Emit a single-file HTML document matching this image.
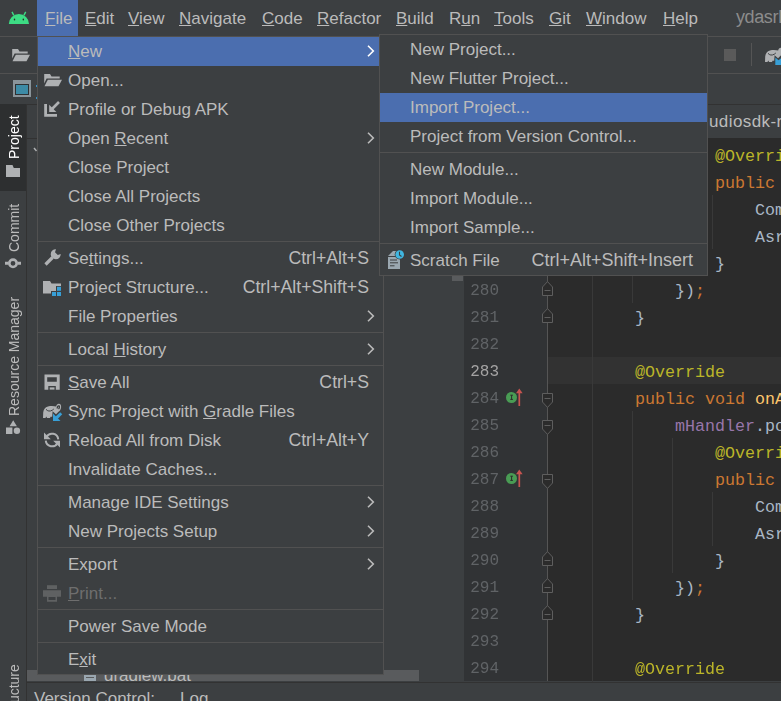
<!DOCTYPE html>
<html><head><meta charset="utf-8">
<style>
*{margin:0;padding:0;box-sizing:border-box}
html,body{width:781px;height:701px;overflow:hidden;background:#3C3F41;font-family:"Liberation Sans",sans-serif;color:#BBBBBB}
.a{position:absolute}
.t{position:absolute;white-space:pre;font-size:17px;line-height:29px;height:29px}
u{text-decoration:underline;text-decoration-thickness:1px;text-underline-offset:1px}
.mb{position:absolute;top:1px;height:36px;line-height:36px;font-size:17px;white-space:pre}
.code{position:absolute;font-family:"Liberation Mono",monospace;font-size:16.67px;line-height:27px;white-space:pre;color:#A9B7C6}
.ln{position:absolute;font-family:"Liberation Mono",monospace;font-size:16px;line-height:27px;color:#606366;text-align:right;width:60px;left:439px}
.kw{color:#CC7832}.an{color:#BBB529}.fn{color:#FFC66D}.fld{color:#9876AA}
.sep{position:absolute;height:1px;background:#515151}
.sc{position:absolute;white-space:pre;font-size:17.7px;line-height:29px;text-align:right}
.arr{position:absolute;width:9px;height:14px}
</style></head><body>

<!-- menubar -->
<div class="a" style="left:0;top:0;width:781px;height:36px;background:#3C3F41"></div>
<div class="a" style="left:0;top:36px;width:781px;height:1px;background:#515151"></div>
<svg class="a" style="left:8px;top:11px" width="22" height="14" viewBox="0 0 22 14">
 <path d="M0.8 13.1 A10.1 10 0 0 1 21 13.1 Z" fill="#3DDC84"/>
 <path d="M4 0.9 L5.8 4.4 M17.7 0.9 L15.9 4.4" stroke="#3DDC84" stroke-width="1.4"/>
 <ellipse cx="6.5" cy="8.6" rx="0.75" ry="1" fill="#2B2B2B"/><ellipse cx="15.3" cy="8.6" rx="0.75" ry="1" fill="#2B2B2B"/>
</svg>
<div class="a" style="left:37px;top:0;width:41px;height:36px;background:#4B6EAF"></div>
<div class="mb" style="left:45px"><u>F</u>ile</div>
<div class="mb" style="left:85px"><u>E</u>dit</div>
<div class="mb" style="left:128px"><u>V</u>iew</div>
<div class="mb" style="left:179px"><u>N</u>avigate</div>
<div class="mb" style="left:262px"><u>C</u>ode</div>
<div class="mb" style="left:317px"><u>R</u>efactor</div>
<div class="mb" style="left:396px"><u>B</u>uild</div>
<div class="mb" style="left:449px">R<u>u</u>n</div>
<div class="mb" style="left:494px"><u>T</u>ools</div>
<div class="mb" style="left:549px"><u>G</u>it</div>
<div class="mb" style="left:586px"><u>W</u>indow</div>
<div class="mb" style="left:663px"><u>H</u>elp</div>
<div class="mb" style="left:736px;top:-1px;color:#8C8C8C;font-size:18px;letter-spacing:-0.4px">ydasrDemo</div>

<!-- toolbar -->
<div class="a" style="left:0;top:73px;width:781px;height:1px;background:#515151"></div>
<div class="a" style="left:0;top:104px;width:781px;height:1px;background:#323232"></div>

<!-- left stripe -->
<div class="a" style="left:0;top:105px;width:26px;height:596px;background:#3C3F41"></div>
<div class="a" style="left:0;top:104px;width:26px;height:87px;background:#2D2F30"></div>
<div class="a" style="left:26px;top:105px;width:1px;height:596px;background:#323232"></div>


<!-- toolbar icons -->
<svg class="a" style="left:11px;top:47px" width="20" height="16" viewBox="0 0 20 16">
 <path d="M1.2 2 H7 L8.5 4.5 H16.7 V6.6 H3.6 L1.2 11.5 Z" fill="#AFB1B3"/>
 <path d="M4.8 7.8 H19 L15.5 14.3 H1.5 Z" fill="#AFB1B3"/>
</svg>
<div class="a" style="left:13px;top:80px;width:18px;height:17px;background:#8A949A"></div>
<div class="a" style="left:15px;top:84px;width:14px;height:11px;background:#2F3133"></div>
<div class="a" style="left:16px;top:85px;width:12px;height:9px;background:#3D8BA6"></div>
<div class="a" style="left:36px;top:85px;width:1px;height:2px;background:#3592C4"></div>
<div class="a" style="left:36px;top:97px;width:1px;height:2px;background:#3592C4"></div>
<div class="a" style="left:724px;top:49px;width:12px;height:12px;background:#5A5A5A"></div>
<div class="a" style="left:751px;top:43px;width:1px;height:23px;background:#555555"></div>
<svg class="a" style="left:761.5px;top:43px" width="24" height="24" viewBox="0 0 24 24">
 <path d="M3 19 L3.2 13.5 C3.5 10.5 5 8.3 8 7.5 C11 6.8 14 7 16.2 7.6 C16.5 5.8 17.5 4.8 18.8 4.8 C20.6 4.8 21.3 6.5 21.1 8.5 C20.9 10.5 19.8 11.8 18.8 12.6 L16 15.2 L12.6 12.2 L12.2 17.8 L10.5 17.8 L10 19 L7 19 L6.4 17.6 L5.4 19 Z" fill="#AFB1B3"/>
 <path d="M6 10.3 C7.5 12.3 10 12.6 12.3 11.2 L13.8 10" fill="none" stroke="#3C3F41" stroke-width="1"/>
 <path d="M13.3 14.5 L16.5 17.3 L20 14.5 L24 14.5 V22 H13.3 Z" fill="#389FD6"/>
</svg>
<div class="a" style="left:709px;top:104px;font-size:17px;line-height:36px;white-space:pre;letter-spacing:0.4px">udiosdk-release</div>

<!-- stripe -->
<div class="a" style="left:5.5px;top:159px;font-size:14px;line-height:16px;white-space:pre;color:#FFFFFF;transform-origin:0 0;transform:rotate(-90deg);will-change:transform">Project</div>
<svg class="a" style="left:6px;top:165px" width="14" height="12" viewBox="0 0 14 12">
 <path d="M0 0 H6.5 L7.8 3 H14 V12 H0 Z" fill="#AFB1B3"/>
</svg>
<div class="a" style="left:5.5px;top:252px;font-size:14px;line-height:16px;white-space:pre;transform-origin:0 0;transform:rotate(-90deg);will-change:transform">Commit</div>
<svg class="a" style="left:5px;top:258px" width="16" height="11" viewBox="0 0 16 11">
 <circle cx="8" cy="5.3" r="3.7" fill="none" stroke="#AFB1B3" stroke-width="2.6"/>
 <path d="M0 5.3 H3.5 M12.5 5.3 H16" stroke="#AFB1B3" stroke-width="3"/>
</svg>
<div class="a" style="left:5.5px;top:415.5px;font-size:14px;line-height:16px;white-space:pre;transform-origin:0 0;transform:rotate(-90deg);will-change:transform">Resource Manager</div>
<svg class="a" style="left:5px;top:419px" width="16" height="16" viewBox="0 0 16 16">
 <path d="M8.2 1.3 L11.9 7.2 H4.6 Z" fill="#AFB1B3"/>
 <rect x="1" y="8.5" width="6.4" height="6.5" fill="#AFB1B3"/>
 <circle cx="11.9" cy="11.7" r="3.2" fill="#AFB1B3"/>
</svg>
<div class="a" style="left:5.5px;top:721px;font-size:14px;line-height:16px;white-space:pre;transform-origin:0 0;transform:rotate(-90deg);will-change:transform">Structure</div>
<div class="a" style="left:27px;top:138px;width:10px;height:1px;background:#323232"></div>

<!-- project panel bottom -->
<svg class="a" style="left:33px;top:146px" width="6" height="8" viewBox="0 0 6 8"><path d="M1 2 L3.5 5" stroke="#AFB1B3" stroke-width="1.4"/></svg>
<div class="a" style="left:452px;top:200px;width:11px;height:81px;background:#595B5D"></div>
<div class="a" style="left:27px;top:670px;width:392px;height:11px;background:#595B5D;overflow:hidden">
  <div class="a" style="left:77px;top:-9px;font-size:17px;line-height:29px;white-space:pre;color:#BBBBBB">gradlew.bat</div>
  <div class="a" style="left:57px;top:3px;width:12px;height:8px;background:#9AA7B0"></div>
  <div class="a" style="left:59px;top:7px;width:8px;height:1px;background:#595B5D"></div>
</div>

<!-- editor -->
<div class="a" style="left:0;top:138px;width:781px;height:544px;overflow:hidden"><div class="a" style="left:0;top:-138px;width:781px;height:701px">
<div class="a" style="left:464px;top:138px;width:317px;height:543px;background:#313335"></div>
<div class="a" style="left:547px;top:138px;width:234px;height:543px;background:#2B2B2B"></div>

<div class="a" style="left:548px;top:357px;width:233px;height:27px;background:#323232"></div>
<div class="a" style="left:592px;top:114px;width:1px;height:729px;background:#393939"></div>
<div class="a" style="left:632px;top:141px;width:1px;height:162px;background:#393939"></div>
<div class="a" style="left:672px;top:195px;width:1px;height:81px;background:#393939"></div>
<div class="a" style="left:712px;top:195px;width:1px;height:54px;background:#393939"></div>
<div class="a" style="left:632px;top:411px;width:1px;height:189px;background:#393939"></div>
<div class="a" style="left:672px;top:438px;width:1px;height:135px;background:#393939"></div>
<div class="a" style="left:712px;top:492px;width:1px;height:54px;background:#393939"></div>
<div class="code" style="left:635px;top:116px"><span class="fld">mHandler</span>.post(<span class="kw">new </span>Runnable() {</div>
<div class="code" style="left:635px;top:143px">        <span class="an">@Override</span></div>
<div class="code" style="left:635px;top:170px">        <span class="kw">public void </span><span class="fn">run</span>() {</div>
<div class="code" style="left:635px;top:197px">            CommonUtils.log(</div>
<div class="code" style="left:635px;top:224px">            AsrManager.getInstance()</div>
<div class="code" style="left:635px;top:251px">        }</div>
<div class="code" style="left:635px;top:278px">    })<span class="kw">;</span></div>
<div class="code" style="left:635px;top:305px">}</div>
<div class="code" style="left:635px;top:332px"></div>
<div class="code" style="left:635px;top:359px"><span class="an">@Override</span></div>
<div class="code" style="left:635px;top:386px"><span class="kw">public void </span><span class="fn">onAsrResult</span>() {</div>
<div class="code" style="left:635px;top:413px">    <span class="fld">mHandler</span>.post(<span class="kw">new </span>Runnable() {</div>
<div class="code" style="left:635px;top:440px">        <span class="an">@Override</span></div>
<div class="code" style="left:635px;top:467px">        <span class="kw">public void </span><span class="fn">run</span>() {</div>
<div class="code" style="left:635px;top:494px">            CommonUtils.log(</div>
<div class="code" style="left:635px;top:521px">            AsrManager.getInstance()</div>
<div class="code" style="left:635px;top:548px">        }</div>
<div class="code" style="left:635px;top:575px">    })<span class="kw">;</span></div>
<div class="code" style="left:635px;top:602px">}</div>
<div class="code" style="left:635px;top:629px"></div>
<div class="code" style="left:635px;top:656px"><span class="an">@Override</span></div>
<div class="code" style="left:635px;top:683px"><span class="kw">public void </span><span class="fn">onAsrEnd</span>() {</div>
<div class="ln" style="top:116px;color:#606366">274</div>
<div class="ln" style="top:143px;color:#606366">275</div>
<div class="ln" style="top:170px;color:#606366">276</div>
<div class="ln" style="top:197px;color:#606366">277</div>
<div class="ln" style="top:224px;color:#606366">278</div>
<div class="ln" style="top:251px;color:#606366">279</div>
<div class="ln" style="top:278px;color:#606366">280</div>
<div class="ln" style="top:305px;color:#606366">281</div>
<div class="ln" style="top:332px;color:#606366">282</div>
<div class="ln" style="top:359px;color:#A4A3A3">283</div>
<div class="ln" style="top:386px;color:#606366">284</div>
<div class="ln" style="top:413px;color:#606366">285</div>
<div class="ln" style="top:440px;color:#606366">286</div>
<div class="ln" style="top:467px;color:#606366">287</div>
<div class="ln" style="top:494px;color:#606366">288</div>
<div class="ln" style="top:521px;color:#606366">289</div>
<div class="ln" style="top:548px;color:#606366">290</div>
<div class="ln" style="top:575px;color:#606366">291</div>
<div class="ln" style="top:602px;color:#606366">292</div>
<div class="ln" style="top:629px;color:#606366">293</div>
<div class="ln" style="top:656px;color:#606366">294</div>
<div class="ln" style="top:683px;color:#606366">295</div>
<div class="a" style="left:547px;top:138px;width:1px;height:543px;background:#555555"></div>
<svg class="a" style="left:541px;top:392px" width="13" height="17" viewBox="0 0 13 17"><path d="M1.5 1.5 H11.5 V10 L6.5 15.4 L1.5 10 Z" fill="#2B2B2B" stroke="#5E5E5E" stroke-width="1"/><path d="M3.5 6.5 H9.5" stroke="#5E5E5E" stroke-width="1"/></svg>
<svg class="a" style="left:541px;top:419px" width="13" height="17" viewBox="0 0 13 17"><path d="M1.5 1.5 H11.5 V10 L6.5 15.4 L1.5 10 Z" fill="#2B2B2B" stroke="#5E5E5E" stroke-width="1"/><path d="M3.5 6.5 H9.5" stroke="#5E5E5E" stroke-width="1"/></svg>
<svg class="a" style="left:541px;top:473px" width="13" height="17" viewBox="0 0 13 17"><path d="M1.5 1.5 H11.5 V10 L6.5 15.4 L1.5 10 Z" fill="#2B2B2B" stroke="#5E5E5E" stroke-width="1"/><path d="M3.5 6.5 H9.5" stroke="#5E5E5E" stroke-width="1"/></svg>
<svg class="a" style="left:541px;top:122px" width="13" height="17" viewBox="0 0 13 17"><path d="M1.5 1.5 H11.5 V10 L6.5 15.4 L1.5 10 Z" fill="#2B2B2B" stroke="#5E5E5E" stroke-width="1"/><path d="M3.5 6.5 H9.5" stroke="#5E5E5E" stroke-width="1"/></svg>
<svg class="a" style="left:541px;top:253px" width="13" height="17" viewBox="0 0 13 17"><path d="M1.5 15.5 H11.5 V7 L6.5 1.6 L1.5 7 Z" fill="#2B2B2B" stroke="#5E5E5E" stroke-width="1"/><path d="M3.5 10.5 H9.5" stroke="#5E5E5E" stroke-width="1"/></svg>
<svg class="a" style="left:541px;top:280px" width="13" height="17" viewBox="0 0 13 17"><path d="M1.5 15.5 H11.5 V7 L6.5 1.6 L1.5 7 Z" fill="#2B2B2B" stroke="#5E5E5E" stroke-width="1"/><path d="M3.5 10.5 H9.5" stroke="#5E5E5E" stroke-width="1"/></svg>
<svg class="a" style="left:541px;top:307px" width="13" height="17" viewBox="0 0 13 17"><path d="M1.5 15.5 H11.5 V7 L6.5 1.6 L1.5 7 Z" fill="#2B2B2B" stroke="#5E5E5E" stroke-width="1"/><path d="M3.5 10.5 H9.5" stroke="#5E5E5E" stroke-width="1"/></svg>
<svg class="a" style="left:541px;top:550px" width="13" height="17" viewBox="0 0 13 17"><path d="M1.5 15.5 H11.5 V7 L6.5 1.6 L1.5 7 Z" fill="#2B2B2B" stroke="#5E5E5E" stroke-width="1"/><path d="M3.5 10.5 H9.5" stroke="#5E5E5E" stroke-width="1"/></svg>
<svg class="a" style="left:541px;top:577px" width="13" height="17" viewBox="0 0 13 17"><path d="M1.5 15.5 H11.5 V7 L6.5 1.6 L1.5 7 Z" fill="#2B2B2B" stroke="#5E5E5E" stroke-width="1"/><path d="M3.5 10.5 H9.5" stroke="#5E5E5E" stroke-width="1"/></svg>
<svg class="a" style="left:541px;top:604px" width="13" height="17" viewBox="0 0 13 17"><path d="M1.5 15.5 H11.5 V7 L6.5 1.6 L1.5 7 Z" fill="#2B2B2B" stroke="#5E5E5E" stroke-width="1"/><path d="M3.5 10.5 H9.5" stroke="#5E5E5E" stroke-width="1"/></svg>
<svg class="a" style="left:505px;top:388px" width="19" height="19" viewBox="0 0 19 19"><circle cx="6.5" cy="9.5" r="5.5" fill="#499C54"/><path d="M5.3 7.2 H7.9 M6.6 7.2 V11.4 M5.3 11.4 H7.9" stroke="#2B2B2B" stroke-width="1"/><path d="M14.3 18 V4" stroke="#C75450" stroke-width="1.7"/><path d="M11 5.2 L14.3 0.6 L17.6 5.2 Z" fill="#C75450"/></svg>
<svg class="a" style="left:505px;top:469px" width="19" height="19" viewBox="0 0 19 19"><circle cx="6.5" cy="9.5" r="5.5" fill="#499C54"/><path d="M5.3 7.2 H7.9 M6.6 7.2 V11.4 M5.3 11.4 H7.9" stroke="#2B2B2B" stroke-width="1"/><path d="M14.3 18 V4" stroke="#C75450" stroke-width="1.7"/><path d="M11 5.2 L14.3 0.6 L17.6 5.2 Z" fill="#C75450"/></svg>
</div></div>
<!-- status bar -->
<div class="a" style="left:27px;top:682px;width:754px;height:1px;background:#323232"></div>
<div class="a" style="left:34px;top:687px;font-size:17px;line-height:24px;white-space:pre">Version Control:</div><div class="a" style="left:180px;top:687px;font-size:17px;line-height:24px;white-space:pre">Log</div>

<!-- File menu -->
<div class="a" style="left:37px;top:36px;width:347px;height:639px;background:#3C3F41;border:1px solid #515151"></div>
<div class="a" style="left:38px;top:37px;width:345px;height:29px;background:#4B6EAF"></div>

<div class="t" style="left:68px;top:37px;"><u>N</u>ew</div>
<svg class="a" style="left:366px;top:44px" width="10" height="14" viewBox="0 0 10 14"><path d="M2 1.8 L7.3 7 L2 12.2" fill="none" stroke="#FFFFFF" stroke-width="1.6"/></svg>
<div class="t" style="left:68px;top:66px;">Open...</div>
<div class="t" style="left:68px;top:95px;">Profile or Debug APK</div>
<div class="t" style="left:68px;top:124px;">Open <u>R</u>ecent</div>
<svg class="a" style="left:366px;top:131px" width="10" height="14" viewBox="0 0 10 14"><path d="M2 1.8 L7.3 7 L2 12.2" fill="none" stroke="#BBBBBB" stroke-width="1.6"/></svg>
<div class="t" style="left:68px;top:153px;">Close Project</div>
<div class="t" style="left:68px;top:182px;">Close All Projects</div>
<div class="t" style="left:68px;top:211px;">Close Other Projects</div>
<div class="t" style="left:68px;top:244px;">Se<u>t</u>tings...</div>
<div class="sc" style="right:412px;top:244px">Ctrl+Alt+S</div>
<div class="t" style="left:68px;top:273px;">Project Structure...</div>
<div class="sc" style="right:412px;top:273px">Ctrl+Alt+Shift+S</div>
<div class="t" style="left:68px;top:302px;">File Properties</div>
<svg class="a" style="left:366px;top:309px" width="10" height="14" viewBox="0 0 10 14"><path d="M2 1.8 L7.3 7 L2 12.2" fill="none" stroke="#BBBBBB" stroke-width="1.6"/></svg>
<div class="t" style="left:68px;top:335px;">Local <u>H</u>istory</div>
<svg class="a" style="left:366px;top:342px" width="10" height="14" viewBox="0 0 10 14"><path d="M2 1.8 L7.3 7 L2 12.2" fill="none" stroke="#BBBBBB" stroke-width="1.6"/></svg>
<div class="t" style="left:68px;top:368px;"><u>S</u>ave All</div>
<div class="sc" style="right:412px;top:368px">Ctrl+S</div>
<div class="t" style="left:68px;top:397px;">Sync Project with <u>G</u>radle Files</div>
<div class="t" style="left:68px;top:426px;">Reload All from Disk</div>
<div class="sc" style="right:412px;top:426px">Ctrl+Alt+Y</div>
<div class="t" style="left:68px;top:455px;">Invalidate Caches...</div>
<div class="t" style="left:68px;top:488px;">Manage IDE Settings</div>
<svg class="a" style="left:366px;top:495px" width="10" height="14" viewBox="0 0 10 14"><path d="M2 1.8 L7.3 7 L2 12.2" fill="none" stroke="#BBBBBB" stroke-width="1.6"/></svg>
<div class="t" style="left:68px;top:517px;">New Projects Setup</div>
<svg class="a" style="left:366px;top:524px" width="10" height="14" viewBox="0 0 10 14"><path d="M2 1.8 L7.3 7 L2 12.2" fill="none" stroke="#BBBBBB" stroke-width="1.6"/></svg>
<div class="t" style="left:68px;top:550px;">Export</div>
<svg class="a" style="left:366px;top:557px" width="10" height="14" viewBox="0 0 10 14"><path d="M2 1.8 L7.3 7 L2 12.2" fill="none" stroke="#BBBBBB" stroke-width="1.6"/></svg>
<div class="t" style="left:68px;top:579px;color:#6E6E6E;"><u>P</u>rint...</div>
<div class="t" style="left:68px;top:612px;">Power Save Mode</div>
<div class="t" style="left:68px;top:645px;">E<u>x</u>it</div>
<div class="sep" style="left:38px;top:241px;width:345px"></div>
<div class="sep" style="left:38px;top:332px;width:345px"></div>
<div class="sep" style="left:38px;top:365px;width:345px"></div>
<div class="sep" style="left:38px;top:485px;width:345px"></div>
<div class="sep" style="left:38px;top:547px;width:345px"></div>
<div class="sep" style="left:38px;top:609px;width:345px"></div>
<div class="sep" style="left:38px;top:642px;width:345px"></div>

<!-- file menu icons -->
<svg class="a" style="left:43px;top:72px" width="20" height="16" viewBox="0 0 20 16">
 <path d="M1.2 2 H7 L8.5 4.5 H16.7 V6.6 H3.6 L1.2 11.5 Z" fill="#AFB1B3"/>
 <path d="M4.8 7.8 H19 L15.5 14.3 H1.5 Z" fill="#AFB1B3"/>
</svg>
<svg class="a" style="left:43px;top:100px" width="18" height="18" viewBox="0 0 18 18">
 <path d="M2.6 4 V15.3 H14" fill="none" stroke="#AFB1B3" stroke-width="2.8"/>
 <path d="M16 2 L9 9" stroke="#AFB1B3" stroke-width="2.6"/>
 <path d="M6.2 4.8 V12 H13.4 Z" fill="#AFB1B3"/>
</svg>
<svg class="a" style="left:43px;top:247px" width="18" height="20" viewBox="0 0 18 20">
 <path d="M2.5 17.5 L9.5 10.5" stroke="#AFB1B3" stroke-width="3.2" stroke-linecap="butt"/>
 <path d="M13 2.3 A5 5 0 1 0 17.7 7 L14.8 8 L12 5.2 Z" fill="#AFB1B3"/>
</svg>
<svg class="a" style="left:43px;top:280px" width="20" height="18" viewBox="0 0 20 18">
 <path d="M0 1 H7 L8.5 3.5 H18 V6 H13 V11 H8 V13.5 H0 Z" fill="#AFB1B3"/>
 <rect x="14" y="6.8" width="4" height="4" fill="#389FD6"/>
 <rect x="9" y="12" width="4" height="4" fill="#389FD6"/>
 <rect x="14" y="12" width="4" height="4" fill="#389FD6"/>
</svg>
<svg class="a" style="left:44px;top:374px" width="17" height="17" viewBox="0 0 17 17">
 <path d="M0.5 0.5 H15.7 V15.7 H0.5 Z M3.2 3.2 V7.8 H12.8 V3.2 Z M4.3 12 V15.7 H11.8 V12 Z" fill="#AFB1B3" fill-rule="evenodd"/>
 <rect x="5.7" y="13.4" width="4.8" height="2.2" fill="#AFB1B3"/>
</svg>
<svg class="a" style="left:40px;top:399px" width="24" height="24" viewBox="0 0 24 24">
 <path d="M3 19 L3.2 13.5 C3.5 10.5 5 8.3 8 7.5 C11 6.8 14 7 16.2 7.6 C16.5 5.8 17.5 4.8 18.8 4.8 C20.6 4.8 21.3 6.5 21.1 8.5 C20.9 10.5 19.8 11.8 18.8 12.6 L16 15.2 L12.6 12.2 L12.2 17.8 L10.5 17.8 L10 19 L7 19 L6.4 17.6 L5.4 19 Z" fill="#AFB1B3"/>
 <path d="M17.2 9.5 C17.3 7.5 18 6.8 18.9 7 C19.8 7.2 19.6 9 18.5 10" fill="none" stroke="#3C3F41" stroke-width="1.3"/>
 <path d="M6 10.3 C7.5 12.3 10 12.6 12.3 11.2 L13.8 10" fill="none" stroke="#3C3F41" stroke-width="1"/>
 <path d="M21.2 14.2 L16.5 18.9" stroke="#389FD6" stroke-width="3"/>
 <path d="M13 14.5 V22 H20.5 Z" fill="#389FD6"/>
</svg>
<svg class="a" style="left:43px;top:432px" width="18" height="17" viewBox="0 0 18 17">
 <path d="M15.27 7.34 A6.3 6.3 0 0 0 3.54 4.85" fill="none" stroke="#AFB1B3" stroke-width="2"/>
 <path d="M1 0.6 V7.3 H7.8 Z" fill="#AFB1B3"/>
 <path d="M2.73 8.66 A6.3 6.3 0 0 0 14.46 11.15" fill="none" stroke="#AFB1B3" stroke-width="2"/>
 <path d="M17 15.5 V8.7 H10.2 Z" fill="#AFB1B3"/>
</svg>
<svg class="a" style="left:43px;top:585px" width="18" height="17" viewBox="0 0 18 17">
 <rect x="4" y="0.2" width="10" height="3.8" fill="#5F6162"/>
 <path d="M0 5.2 H18 V11.8 H14 V16.8 H4 V11.8 H0 Z M5.5 12 V15 H12.5 V12 Z" fill="#5F6162" fill-rule="evenodd"/>
</svg>

<!-- Submenu -->
<div class="a" style="left:379px;top:34px;width:329px;height:242px;background:#3C3F41;border:1px solid #515151"></div>
<div class="a" style="left:380px;top:93px;width:327px;height:29px;background:#4B6EAF"></div>

<div class="t" style="left:410px;top:35px">New Project...</div>
<div class="t" style="left:410px;top:64px">New Flutter Project...</div>
<div class="t" style="left:410px;top:93px">Import Project...</div>
<div class="t" style="left:410px;top:122px">Project from Version Control...</div>
<div class="t" style="left:410px;top:155px">New Module...</div>
<div class="t" style="left:410px;top:184px">Import Module...</div>
<div class="t" style="left:410px;top:213px">Import Sample...</div>
<div class="t" style="left:410px;top:246px">Scratch File</div>
<div class="sc" style="right:88px;top:246px;font-size:18px">Ctrl+Alt+Shift+Insert</div>
<div class="sep" style="left:380px;top:152px;width:327px"></div>
<div class="sep" style="left:380px;top:243px;width:327px"></div>

<svg class="a" style="left:387px;top:249px" width="18" height="21" viewBox="0 0 18 21">
 <path d="M1 7 L6 2 H10 V7 Z" fill="#9AA7B0"/>
 <path d="M1 8 H13 V20 H1 Z" fill="#9AA7B0"/>
 <path d="M3 11 H10 M3 13.8 H11 M3 16.8 H7.5" stroke="#3C3F41" stroke-width="1"/>
 <circle cx="12.7" cy="5.5" r="5" fill="#3C3F41"/>
 <circle cx="12.7" cy="5.5" r="4.3" fill="#40B6E0"/>
 <path d="M12.5 2.8 V6 L14.5 7.5" fill="none" stroke="#3C3F41" stroke-width="1.1"/>
</svg>

</body></html>
